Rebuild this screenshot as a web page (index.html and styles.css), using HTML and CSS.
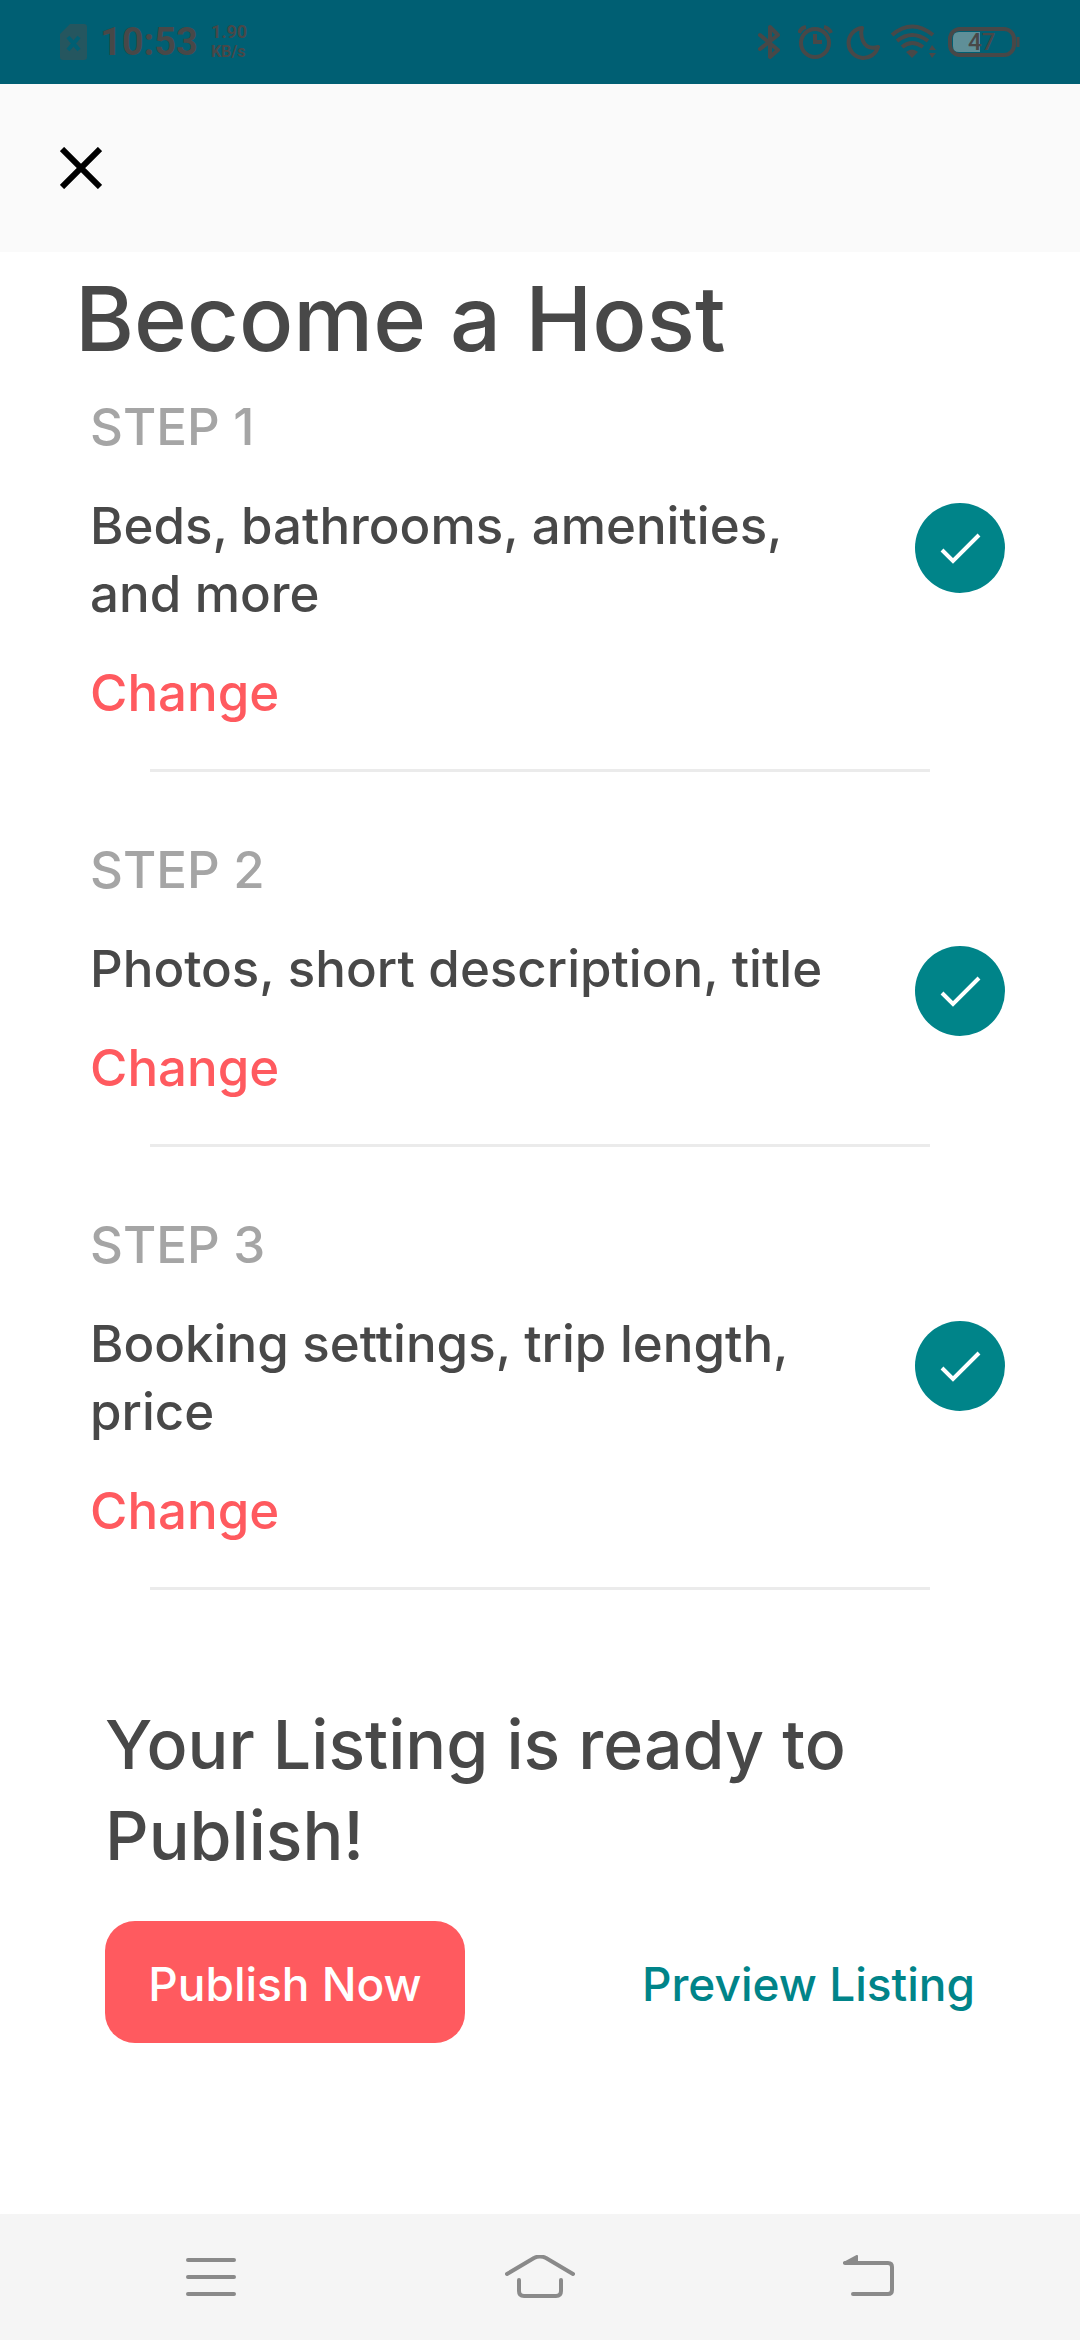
FILE: index.html
```html
<!DOCTYPE html>
<html lang="en">
<head>
    <meta charset="UTF-8">
    <meta name="viewport" content="width=device-width, initial-scale=1.0">
    <title>Become a Host</title>
    <link rel="stylesheet" href="styles.css">
</head>
<body>
    <!-- Status bar -->
    <div class="status-bar">
        <div class="status-left">
            <svg width="27" height="36" viewBox="0 0 27 36">
                <path d="M10 0H24Q27 0 27 3V33Q27 36 24 36H3Q0 36 0 33V10Z" fill="#25565f"/>
                <path d="M8 13l11 13M19 13L8 26" stroke="#005f73" stroke-width="4"/>
            </svg>
            <span class="time">10:53</span>
            <div class="speed">
                <span>1.90</span>
                <span class="unit">KB/s</span>
            </div>
        </div>
        <div class="status-right">
            <!-- bluetooth -->
            <svg width="30" height="40" viewBox="0 0 30 40">
                <path d="M2 13L20 28L12 35V5L20 13L2 27" fill="none" stroke="#484848" stroke-width="4" stroke-linejoin="round" stroke-linecap="round"/>
            </svg>
            <!-- alarm -->
            <svg width="36" height="40" viewBox="0 0 36 40" fill="none" stroke="#484848" stroke-width="4">
                <circle cx="17" cy="21" r="14"/>
                <path d="M17 12V20H24"/>
                <path d="M1 11Q3 6 8 5M26 5Q31 6 33 11"/>
            </svg>
            <!-- do not disturb -->
            <svg width="36" height="40" viewBox="0 0 36 40">
                <path d="M18 6A15 15 0 1 0 34 25Q23 28 19 19Q16 12 18 6Z" fill="none" stroke="#484848" stroke-width="4" stroke-linejoin="round"/>
            </svg>
            <!-- wifi -->
            <svg width="48" height="40" viewBox="0 0 48 40" fill="none" stroke="#484848" stroke-width="4">
                <path d="M2 13Q22 -4 43 13M7 19Q22 7 38 19M12 25Q22 17 33 25"/>
                <path d="M16 30Q22 25 28 30L22 36Z" fill="#484848" stroke="none"/>
                <path d="M39 28L42 23L46 28ZM39 31H46L42 36Z" fill="#484848" stroke="none"/>
            </svg>
            <!-- battery -->
            <svg width="72" height="40" viewBox="0 0 72 40">
                <rect x="2" y="7" width="64" height="26" rx="10" fill="none" stroke="#484848" stroke-width="4"/>
                <path d="M70 15V25" stroke="#484848" stroke-width="3"/>
                <path d="M32 10V30H11Q5 30 5 24V16Q5 10 11 10Z" fill="#5f8f98"/>
                <text x="20" y="28" class="battery-text">47</text>
            </svg>
        </div>
    </div>

    <header class="header">
        <button class="close" aria-label="Close">
            <svg width="42" height="42" viewBox="0 0 42 42">
                <path d="M2 2L40 40M40 2L2 40" stroke="#000" stroke-width="6"/>
            </svg>
        </button>
    </header>

    <main>
        <h1>Become a Host</h1>

        <!-- Steps -->
        <section class="step">
            <div class="step-text">
                <span class="label">STEP 1</span>
                <p>Beds, bathrooms, amenities, and more</p>
                <a href="#" class="change">Change</a>
            </div>
            <span class="check">
                <svg width="90" height="90" viewBox="0 0 90 90">
                    <path d="M27 47L38 58L64 32" fill="none" stroke="#fff" stroke-width="4"/>
                </svg>
            </span>
        </section>
        <hr>

        <section class="step">
            <div class="step-text">
                <span class="label">STEP 2</span>
                <p>Photos, short description, title</p>
                <a href="#" class="change">Change</a>
            </div>
            <span class="check">
                <svg width="90" height="90" viewBox="0 0 90 90">
                    <path d="M27 47L38 58L64 32" fill="none" stroke="#fff" stroke-width="4"/>
                </svg>
            </span>
        </section>
        <hr>

        <section class="step">
            <div class="step-text">
                <span class="label">STEP 3</span>
                <p>Booking settings, trip length, price</p>
                <a href="#" class="change">Change</a>
            </div>
            <span class="check">
                <svg width="90" height="90" viewBox="0 0 90 90">
                    <path d="M27 47L38 58L64 32" fill="none" stroke="#fff" stroke-width="4"/>
                </svg>
            </span>
        </section>
        <hr>

        <!-- Publish -->
        <section class="publish">
            <h2>Your Listing is ready to Publish!</h2>
            <div class="actions">
                <button class="publish-btn">Publish Now</button>
                <a href="#" class="preview">Preview Listing</a>
            </div>
        </section>
    </main>

    <!-- Navigation bar -->
    <nav class="nav-bar">
        <button aria-label="Menu">
            <svg width="70" height="44" viewBox="0 0 70 44">
                <path d="M13 5H59M13 22H59M13 39H59"/>
            </svg>
        </button>
        <button aria-label="Home">
            <svg width="70" height="44" viewBox="0 0 70 44">
                <path d="M2 19L29 3Q35 0 41 3L68 19M14 25V36Q14 41 19 41H51Q56 41 56 36V25"/>
            </svg>
        </button>
        <button aria-label="Back">
            <svg width="70" height="44" viewBox="0 0 70 44">
                <path d="M18 39H53Q57 39 57 35V12Q57 8 53 8H10"/>
                <path d="M9 8L22 1V8Z" class="arrow"/>
            </svg>
        </button>
    </nav>
</body>
</html>
```
FILE: styles.css
```css
* {
    box-sizing: border-box;
}

body {
    margin: 0;
    min-height: 100vh;
    display: flex;
    flex-direction: column;
    font-family: Inter, "Liberation Sans", sans-serif;
    font-weight: 500;
    color: #484848;
    background-color: #fff;
}

button {
    border: none;
    background: none;
    padding: 0;
    font-family: inherit;
    font-weight: inherit;
    cursor: pointer;
}

a {
    text-decoration: none;
}

svg {
    display: block;
}

/* Status bar */
.status-bar {
    height: 84px;
    padding: 0 60px;
    display: flex;
    justify-content: space-between;
    align-items: center;
    background-color: #005f73;
    font-family: Roboto, sans-serif;
}

.status-left {
    display: flex;
    align-items: center;
    gap: 13px;
}

.status-right {
    display: flex;
    gap: 10px;
}

.time {
    font-size: 38px;
    font-weight: 700;
}

.speed {
    display: flex;
    flex-direction: column;
    font-size: 18px;
    line-height: 20px;
    font-weight: 700;
}

.unit {
    font-size: 16px;
}

.battery-text {
    font-size: 24px;
    font-weight: 500;
    fill: #484848;
}

/* Header */
.header {
    height: 168px;
    padding: 0 60px;
    display: flex;
    align-items: center;
    background-color: #fafafa;
}

main {
    flex: 1;
}

h1 {
    margin: 0;
    padding: 9px 75px 16px;
    font-size: 90px;
    line-height: 116px;
    font-weight: 500;
}

/* Steps */
.step {
    display: flex;
    justify-content: space-between;
    padding: 64px 75px 42px 90px;
}

h1 + .step {
    padding-top: 0;
}

.step-text {
    display: flex;
    flex-direction: column;
    align-items: flex-start;
    gap: 31px;
    max-width: 760px;
    font-size: 51px;
    line-height: 68px;
}

.step-text p {
    margin: 0;
}

.label {
    color: #a5a5a5;
}

.change {
    color: #ff5a5f;
}

.check {
    flex: none;
    width: 90px;
    height: 90px;
    margin-top: 110px;
    border-radius: 50%;
    background-color: #008489;
}

hr {
    height: 3px;
    margin: 0 150px;
    border: none;
    background-color: #ebebeb;
}

/* Publish */
.publish {
    padding: 109px 105px 60px;
}

h2 {
    margin: 0 0 40px;
    font-size: 68px;
    line-height: 91px;
    font-weight: 500;
}

.actions {
    display: flex;
    justify-content: space-between;
    align-items: center;
    font-size: 46px;
}

.publish-btn {
    width: 360px;
    height: 122px;
    padding-top: 4px;
    border-radius: 30px;
    background-color: #ff5a5f;
    color: #fff;
    font-size: 46px;
}

.preview {
    padding-top: 4px;
    color: #008489;
}

/* Navigation bar */
.nav-bar {
    height: 126px;
    padding: 0 45px;
    display: flex;
    background-color: #f5f5f5;
}

.nav-bar button {
    flex: 1;
    display: flex;
    justify-content: center;
    align-items: center;
}

.nav-bar path {
    fill: none;
    stroke: #8a8a8a;
    stroke-width: 4;
    stroke-linecap: round;
    stroke-linejoin: round;
}

.nav-bar .arrow {
    fill: #8a8a8a;
    stroke-width: 2;
}
```
